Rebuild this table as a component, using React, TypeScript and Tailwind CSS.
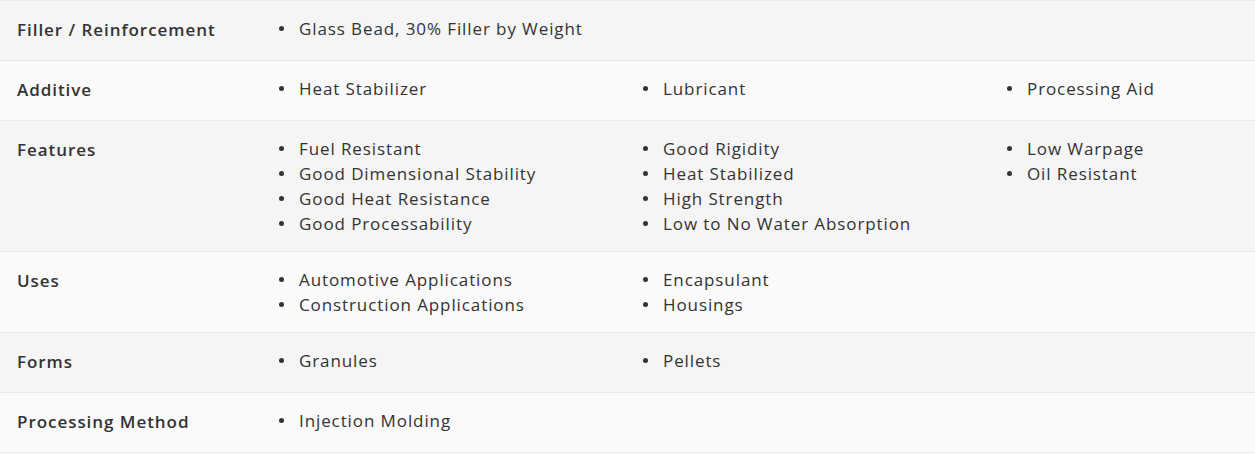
import React from "react";

type Row = { label: string; cols: string[][] };

const rows: Row[] = [
  { label: "Filler / Reinforcement", cols: [["Glass Bead, 30% Filler by Weight"]] },
  { label: "Additive", cols: [["Heat Stabilizer"], ["Lubricant"], ["Processing Aid"]] },
  {
    label: "Features",
    cols: [
      ["Fuel Resistant", "Good Dimensional Stability", "Good Heat Resistance", "Good Processability"],
      ["Good Rigidity", "Heat Stabilized", "High Strength", "Low to No Water Absorption"],
      ["Low Warpage", "Oil Resistant"],
    ],
  },
  {
    label: "Uses",
    cols: [
      ["Automotive Applications", "Construction Applications"],
      ["Encapsulant", "Housings"],
    ],
  },
  { label: "Forms", cols: [["Granules"], ["Pellets"]] },
  { label: "Processing Method", cols: [["Injection Molding"]] },
];

export default function App() {
  return (
    <div
      className="w-[1255px] h-[455px] bg-white overflow-hidden text-[#333333]"
      style={{ fontFamily: '"Open Sans", "Noto Sans", sans-serif' }}
    >
      <div className="border-t border-[#e9e9e9]">
        {rows.map((r, i) => (
          <div
            key={r.label}
            className={`flex border-b border-[#e9e9e9] py-[15px] min-h-[60px] ${
              i % 2 === 0 ? "bg-[#f5f5f5]" : "bg-[#fafafa]"
            }`}
          >
            <div className="w-[263px] shrink-0 pl-[17px] text-[17px] leading-[28px] font-semibold tracking-[0.95px] text-[#333333]">
              {r.label}
            </div>
            <div className="flex">
              {r.cols.map((c, j) => (
                <ul key={j} className="w-[364px] shrink-0 flex flex-col">
                  {c.map((t) => (
                    <li key={t} className="flex items-center h-[25px] text-[17px] leading-[25px] tracking-[0.9px]">
                      <span className="w-[5px] h-[5px] rounded-full bg-[#333333] ml-[16px] mr-[15px] shrink-0" />
                      <span>{t}</span>
                    </li>
                  ))}
                </ul>
              ))}
            </div>
          </div>
        ))}
      </div>
    </div>
  );
}
